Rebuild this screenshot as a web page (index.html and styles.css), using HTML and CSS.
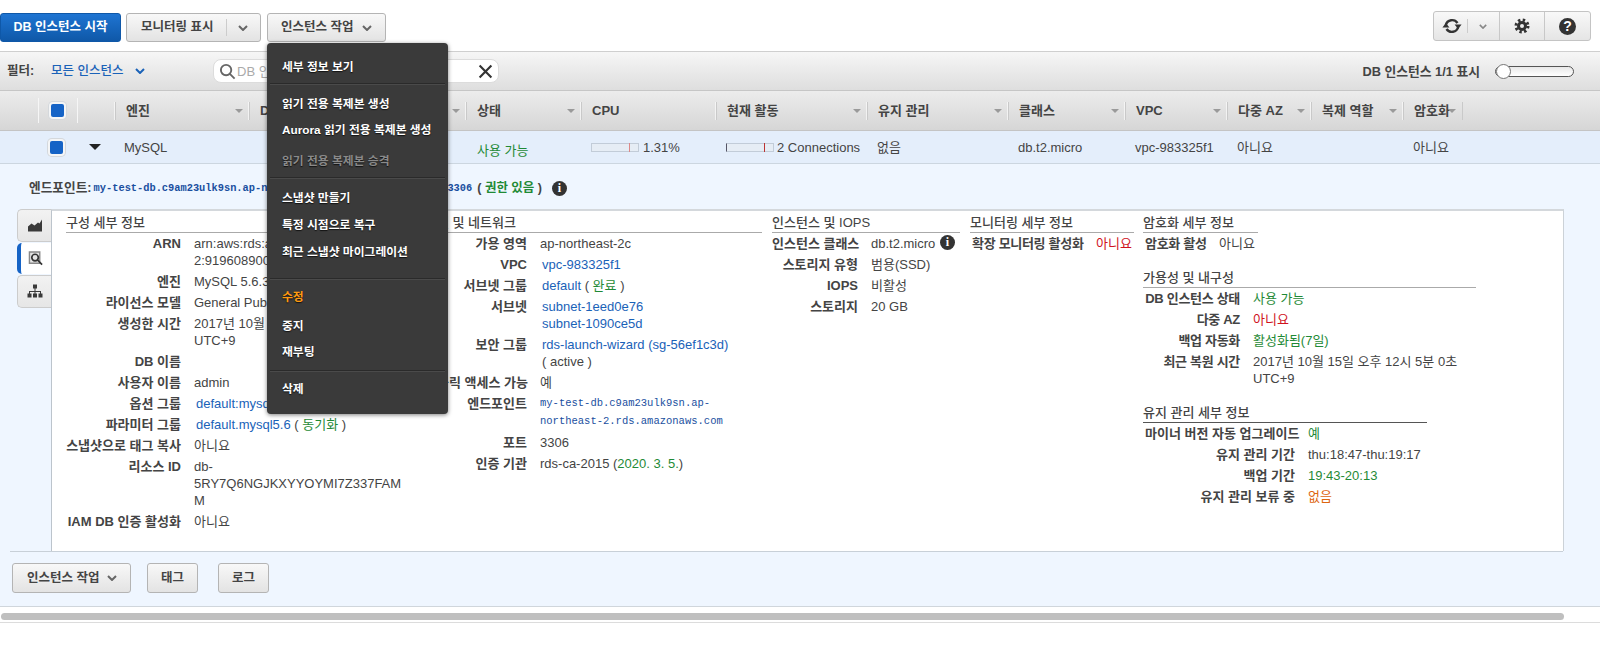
FILE: index.html
```html
<!DOCTYPE html>
<html lang="ko">
<head>
<meta charset="utf-8">
<title>RDS 인스턴스</title>
<link rel="stylesheet" href="styles.css">
</head>
<body>
<header class="topbar">
  <button class="btn btn-primary btn-start">DB 인스턴스 시작</button>
  <button class="btn btn-monitor"><span>모니터링 표시</span><i class="btn-div"></i><svg class="chev" viewBox="0 0 10 6"><path d="M1 1l4 4 4-4"/></svg></button>
  <button class="btn btn-actions"><span>인스턴스 작업</span><svg class="chev" viewBox="0 0 10 6"><path d="M1 1l4 4 4-4"/></svg></button>
  <div class="toolgroup">
    <div class="tool tool-refresh">
      <svg class="ic-refresh" viewBox="0 0 20 20"><path d="M3.800 9A6.500 6.500 0 0 1 15.500 7"/><path d="M16.200 11A6.500 6.500 0 0 1 4.500 13"/><path class="fill" d="M12.600 8.500h7L16.100 13zM7.400 11.500h-7L3.900 7z"/></svg>
      <i class="tool-div"></i>
      <svg class="chev chev-sm" viewBox="0 0 10 6"><path d="M1 1l4 4 4-4"/></svg>
    </div>
    <div class="tool tool-gear">
      <svg class="ic-gear" viewBox="0 0 16 16"><circle class="teeth" cx="8" cy="8" r="6"/><circle class="fill" cx="8" cy="8" r="5"/><circle class="hole" cx="8" cy="8" r="2"/></svg>
    </div>
    <div class="tool tool-help"><span class="help">?</span></div>
  </div>
</header>

<section class="filterbar">
  <span class="filter-label">필터:</span>
  <span class="filter-value">모든 인스턴스</span>
  <svg class="chev chev-blue" viewBox="0 0 10 6"><path d="M1 1l4 4 4-4"/></svg>
  <div class="search">
    <svg class="ic-search" viewBox="0 0 18 18"><circle cx="7.500" cy="7.500" r="5.500"/><path d="M11.500 11.500l5 5"/></svg>
    <span class="placeholder">DB 인스턴스 필터링</span>
    <svg class="ic-x" viewBox="0 0 14 14"><path d="M1.500 1.500l11 11M12.500 1.500l-11 11"/></svg>
  </div>
  <span class="count">DB 인스턴스 1/1 표시</span>
  <div class="slider"><i class="knob"></i></div>
</section>

<div class="thead cols">
  <div class="th th-blank"></div>
  <div class="th th-check th-tall"><i class="check"></i></div>
  <div class="th th-tall"></div>
  <div class="th sort">엔진</div>
  <div class="th sort">DB 인스턴스</div>
  <div class="th sort">상태</div>
  <div class="th">CPU</div>
  <div class="th sort">현재 활동</div>
  <div class="th sort">유지 관리</div>
  <div class="th sort">클래스</div>
  <div class="th sort">VPC</div>
  <div class="th sort">다중 AZ</div>
  <div class="th sort">복제 역할</div>
  <div class="th sort th-last">암호화</div>
</div>

<div class="trow cols">
  <div></div>
  <div class="td-check"><i class="check"></i></div>
  <div class="td-arrow"><i class="tri"></i></div>
  <div class="td td-first">MySQL</div>
  <div class="td"></div>
  <div class="td green td-low">사용 가능</div>
  <div class="td td-first"><i class="bar"><b class="tick tick-cpu"></b></i>1.31%</div>
  <div class="td td-first"><i class="bar bar-conn"><b class="tick tick-conn"></b></i>2 Connections</div>
  <div class="td">없음</div>
  <div class="td">db.t2.micro</div>
  <div class="td">vpc-983325f1</div>
  <div class="td">아니요</div>
  <div class="td"></div>
  <div class="td">아니요</div>
</div>

<section class="detail">
  <div class="endpoint">
    <strong>엔드포인트:</strong>
    <span class="mono mono-blue">my-test-db.c9am23ulk9sn.ap-northeast-2.rds.amazonaws.com:3306</span>
    <span class="paren">( <span class="green">권한 있음</span> )</span>
    <span class="info">i</span>
  </div>
  <div class="panelwrap">
    <nav class="tabs">
      <div class="tab">
        <svg class="ic-tab" viewBox="0 0 16 14"><path d="M1 13V8l3.500-3 3 2L11 4l1.500 1L15 1v12z"/></svg>
      </div>
      <div class="tab tab-on">
        <svg class="ic-tab ic-mag" viewBox="0 0 16 16"><path class="doc" d="M1 1h11v12H1z"/><circle class="lens" cx="7" cy="7" r="3.500"/><path class="lens" d="M9.500 9.500l5 5"/></svg>
      </div>
      <div class="tab">
        <svg class="ic-tab" viewBox="0 0 16 14"><path d="M6 0h4v4H8.500v2.500H14V9h1.500v4h-4V9h1.500V7.500H8.500V9H10v4H6V9h1.500V7.500H3V9h1.500v4h-4V9H2V6.500h5.500V4H6z"/></svg>
      </div>
    </nav>
    <div class="panel">
      <div class="col col1">
        <h3>구성 세부 정보</h3>
        <dl class="kv kv1">
          <dt>ARN</dt><dd>arn:aws:rds:ap-northeast-2:919608900000:db:my-test-db</dd>
          <dt>엔진</dt><dd>MySQL 5.6.35</dd>
          <dt>라이선스 모델</dt><dd>General Public License</dd>
          <dt>생성한 시간</dt><dd>2017년 10월 15일 오후 12시 5분 0초 UTC+9</dd>
          <dt>DB 이름</dt><dd>&nbsp;</dd>
          <dt>사용자 이름</dt><dd>admin</dd>
          <dt>옵션 그룹</dt><dd class="in"><a>default:mysql-5-6</a> ( <span class="green">동기화</span> )</dd>
          <dt>파라미터 그룹</dt><dd class="in"><a>default.mysql5.6</a> ( <span class="green">동기화</span> )</dd>
          <dt>스냅샷으로 태그 복사</dt><dd>아니요</dd>
          <dt>리소스 ID</dt><dd class="brk">db-<br>5RY7Q6NGJKXYYOYMI7Z337FAM<br>M</dd>
          <dt>IAM DB 인증 활성화</dt><dd>아니요</dd>
        </dl>
      </div>
      <div class="col col2">
        <h3>연결 및 네트워크</h3>
        <dl class="kv kv2">
          <dt>가용 영역</dt><dd>ap-northeast-2c</dd>
          <dt>VPC</dt><dd class="in"><a>vpc-983325f1</a></dd>
          <dt>서브넷 그룹</dt><dd class="in"><a>default</a> ( <span class="green">완료</span> )</dd>
          <dt>서브넷</dt><dd class="in"><a>subnet-1eed0e76</a><br><a>subnet-1090ce5d</a></dd>
          <dt>보안 그룹</dt><dd class="in"><a>rds-launch-wizard (sg-56ef1c3d)</a><br>( active )</dd>
          <dt>퍼블릭 액세스 가능</dt><dd>예</dd>
          <dt>엔드포인트</dt><dd class="mono mono-wrap">my-test-db.c9am23ulk9sn.ap-<br>northeast-2.rds.amazonaws.com</dd>
          <dt>포트</dt><dd>3306</dd>
          <dt>인증 기관</dt><dd>rds-ca-2015 (<span class="green">2020. 3. 5.</span>)</dd>
        </dl>
      </div>
      <div class="col col3">
        <h3>인스턴스 및 IOPS</h3>
        <dl class="kv kv3">
          <dt>인스턴스 클래스</dt><dd class="nowrap">db.t2.micro <span class="info info-sm">i</span></dd>
          <dt>스토리지 유형</dt><dd>범용(SSD)</dd>
          <dt>IOPS</dt><dd>비활성</dd>
          <dt>스토리지</dt><dd>20 GB</dd>
        </dl>
      </div>
      <div class="col col4">
        <h3>모니터링 세부 정보</h3>
        <dl class="kv kv4">
          <dt>확장 모니터링 활성화</dt><dd class="red">아니요</dd>
        </dl>
      </div>
      <div class="col col5">
        <div class="sec sec-enc">
          <h3>암호화 세부 정보</h3>
          <dl class="kv kv5">
            <dt>암호화 활성</dt><dd>아니요</dd>
          </dl>
        </div>
        <div class="sec sec-avail">
          <h3>가용성 및 내구성</h3>
          <dl class="kv kv6">
            <dt>DB 인스턴스 상태</dt><dd class="green">사용 가능</dd>
            <dt>다중 AZ</dt><dd class="red">아니요</dd>
            <dt>백업 자동화</dt><dd class="green">활성화됨(7일)</dd>
            <dt>최근 복원 시간</dt><dd>2017년 10월 15일 오후 12시 5분 0초 UTC+9</dd>
          </dl>
        </div>
        <div class="sec sec-maint">
          <h3 class="h-dark">유지 관리 세부 정보</h3>
          <dl class="kv kv7">
            <dt>마이너 버전 자동 업그레이드</dt><dd class="green">예</dd>
            <dt>유지 관리 기간</dt><dd>thu:18:47-thu:19:17</dd>
            <dt>백업 기간</dt><dd class="green">19:43-20:13</dd>
            <dt>유지 관리 보류 중</dt><dd class="orange">없음</dd>
          </dl>
        </div>
      </div>
    </div>
  </div>
  <footer class="actions">
    <button class="btn btn-foot-actions"><span>인스턴스 작업</span><svg class="chev" viewBox="0 0 10 6"><path d="M1 1l4 4 4-4"/></svg></button>
    <button class="btn btn-foot">태그</button>
    <button class="btn btn-foot">로그</button>
  </footer>
</section>

<div class="scrollbar"><div class="thumb"></div></div>

<ul class="menu">
  <li class="mi mi-first">세부 정보 보기</li>
  <li class="sep"></li>
  <li class="mi mi-a">읽기 전용 복제본 생성</li>
  <li class="mi mi-b">Aurora 읽기 전용 복제본 생성</li>
  <li class="mi mi-c off">읽기 전용 복제본 승격</li>
  <li class="sep sep-b"></li>
  <li class="mi mi-a">스냅샷 만들기</li>
  <li class="mi mi-d">특정 시점으로 복구</li>
  <li class="mi mi-e">최근 스냅샷 마이그레이션</li>
  <li class="sep sep-c"></li>
  <li class="mi mi-f hot">수정</li>
  <li class="mi mi-h">중지</li>
  <li class="mi mi-i">재부팅</li>
  <li class="sep sep-d"></li>
  <li class="mi mi-g">삭제</li>
</ul>
</body>
</html>
```
FILE: styles.css
```css
* { box-sizing: border-box; }
html, body { margin: 0; padding: 0; }
body {
  position: relative;
  width: 1600px;
  height: 661px;
  overflow: hidden;
  background: #fff;
  color: #444;
  font: 13px/17px "Liberation Sans", "Noto Sans CJK KR", sans-serif;
}
i { font-style: normal; display: block; }
svg { display: block; }
a { color: #1a62b8; }
.green { color: #1f8a36; }
.red { color: #d0121c; }
.orange { color: #dd6510; }

/* top bar */
.topbar {
  display: flex;
  align-items: flex-start;
  height: 52px;
  padding-top: 13px;
  border-bottom: 1px solid #cfcfcf;
}
.btn {
  display: flex;
  align-items: center;
  justify-content: center;
  height: 29px;
  padding: 0;
  border: 1px solid #b4b4b4;
  border-radius: 3px;
  background: linear-gradient(#f8f8f8, #e3e3e3);
  color: #444;
  font: 700 12.5px/17px "Liberation Sans", "Noto Sans CJK KR", sans-serif;
}
.btn-primary {
  background: linear-gradient(#1e74d2, #0f58a8);
  border-color: #0f58a8;
  color: #fff;
}
.btn-start { width: 121px; margin-right: 5px; }
.btn-monitor { width: 135px; margin-right: 6px; padding-left: 14px; justify-content: flex-start; }
.btn-div { width: 1px; height: 17px; background: #ccc; margin: 0 11px 0 13px; }
.btn-actions { width: 119px; justify-content: flex-start; padding-left: 13px; }
.btn-actions .chev { margin-left: 9px; }
.chev { width: 10px; height: 6px; }
.chev path { fill: none; stroke: #666; stroke-width: 2; }
.chev-sm { width: 8px; height: 5px; }
.chev-sm path { stroke: #888; }
.chev-blue path { stroke: #1a62b8; }

.toolgroup {
  display: flex;
  height: 30px;
  margin: -2px 9px 0 auto;
  width: 158px;
  border: 1px solid #c4c4c4;
  border-radius: 3px;
  background: linear-gradient(#f8f8f8, #e5e5e5);
}
.tool { display: flex; align-items: center; justify-content: center; }
.tool-refresh { width: 66px; border-right: 1px solid #c8c8c8; padding-left: 8px; justify-content: flex-start; }
.tool-gear { width: 45px; border-right: 1px solid #c8c8c8; }
.tool-help { flex: 1; }
.tool-div { width: 1px; height: 14px; background: #ccc; margin: 0 11px 0 5px; }
.ic-refresh { width: 20px; height: 20px; }
.ic-refresh path { fill: none; stroke: #333; stroke-width: 2.400; }
.ic-refresh path.fill { fill: #333; stroke: none; }
.ic-gear { width: 16px; height: 16px; }
.fill { fill: #333; }
.teeth { fill: none; stroke: #333; stroke-width: 3; stroke-dasharray: 2.360 2.352; }
.hole { fill: #eee; }
.help {
  width: 17px; height: 17px;
  border-radius: 50%;
  background: #333;
  color: #fff;
  font: 700 14px/17px "Liberation Sans", sans-serif;
  text-align: center;
}

/* filter */
.filterbar {
  display: flex;
  align-items: center;
  height: 39px;
  padding: 0 0 0 7px;
  background: linear-gradient(#f6f6f6, #dedede);
  border-bottom: 1px solid #c6c6c6;
}
.filter-label { font-weight: 700; font-size: 12.5px; color: #444; width: 44px; }
.filter-value { color: #1a62b8; font-weight: 500; font-size: 12.5px; width: 84px; }
.chev-blue { margin-right: 68px; }
.search {
  display: flex;
  align-items: center;
  width: 286px;
  height: 24px;
  padding: 0 5px 0 5px;
  background: #fff;
  border: 1px solid #dcdcdc;
  border-radius: 8px;
}
.ic-search { width: 17px; height: 17px; }
.ic-search circle, .ic-search path { fill: none; stroke: #666; stroke-width: 2; }
.placeholder { margin-left: 1px; color: #aaa; font-size: 13px; }
.ic-x { width: 15px; height: 15px; margin-left: auto; }
.ic-x path { stroke: #333; stroke-width: 2; fill: none; }
.count { margin-left: auto; font-weight: 700; font-size: 12.8px; color: #444; }
.slider {
  position: relative;
  width: 79px;
  height: 11px;
  margin: 0 26px 0 15px;
  border: 1px solid #555;
  border-radius: 6px;
  background: linear-gradient(#e8e8e8, #fff);
}
.knob {
  position: absolute;
  left: 0; top: -3px;
  width: 15px; height: 15px;
  border: 1px solid #777;
  border-radius: 50%;
  background: #fff;
}

/* table */
.cols {
  display: grid;
  grid-template-columns: 38px 39px 38px 134px 217px 115px 135px 151px 141px 117px 102px 84px 92px 60px 1fr;
}
.thead {
  height: 40px;
  align-items: center;
  background: linear-gradient(#ececec, #d6d6d6);
  border-bottom: 1px solid #c4c4c4;
}
.th {
  position: relative;
  height: 18px;
  padding-left: 10px;
  border-left: 1px solid #c9c9c9;
  box-shadow: -1px 0 0 rgba(255,255,255,.6);
  font-weight: 700;
  font-size: 13px;
  line-height: 18px;
  color: #444;
  white-space: nowrap;
}
.th-blank { border-left: 0; box-shadow: none; }
.th-tall { height: 25px; border-left-color: #f6f6f6; box-shadow: none; }
.th-check { padding-left: 12px; display: flex; align-items: center; }
.th-last { border-right: 1px solid #c9c9c9; }
.sort::after {
  content: "";
  position: absolute;
  right: 6px;
  top: 7px;
  border: 4px solid transparent;
  border-top: 4px solid #9a9a9a;
  border-bottom: 0;
}
.check {
  position: relative;
  width: 13px;
  height: 13px;
  border-radius: 2px;
  background: #1563c6;
  box-shadow: 0 0 0 2px rgba(255,255,255,.75), 0 0 0 3px #d4d8dc;
}
.trow {
  height: 33px;
  align-items: center;
  background: #e4eefb;
  border-bottom: 1px solid #ccd6e0;
  color: #444;
}
.td { padding-left: 10px; white-space: nowrap; display: flex; align-items: center; }
.td-first { padding-left: 9px; }
.td-low { padding-top: 6px; padding-left: 11px; }
.td-check { padding-left: 12px; }
.td-arrow { padding-left: 12px; }
.tri {
  width: 0; height: 0;
  border: 6px solid transparent;
  border-top: 6px solid #222;
  border-bottom: 0;
}
.bar {
  position: relative;
  width: 48px;
  height: 9px;
  margin: 0 4px 0 1px;
  border: 1px solid #c2ccd8;
  background: #e6edf5;
}
.bar-conn { margin-right: 3px; border-left: 1px solid #556; }
.tick { position: absolute; top: -1px; width: 1px; height: 9px; }
.tick-cpu { left: 37px; background: #d88; }
.tick-conn { left: 37px; background: #b33; }

/* details */
.detail {
  height: 443px;
  background: #eff6ff;
  border-bottom: 1px solid #d0d6dc;
}
.endpoint {
  display: flex;
  align-items: center;
  gap: 2px;
  height: 45px;
  padding: 4px 0 0 29px;
  font-size: 12.5px;
}
.endpoint strong { font-size: 12.700px; }
.mono { font-family: "Liberation Mono", monospace; font-size: 10.5px; }
.mono-blue { color: #1a4fa0; font-weight: 700; font-size: 10.350px; }
.paren { margin-left: 3px; font-weight: 700; }
.paren .green { font-weight: 700; }
.info {
  display: inline-block;
  width: 15px; height: 15px;
  margin-left: 8px;
  border-radius: 50%;
  background: #333;
  color: #fff;
  font: 700 12px/15px "Liberation Serif", serif;
  text-align: center;
}
.info-sm { margin-left: 1px; vertical-align: top; }
.panelwrap { display: flex; padding-left: 17px; }
.tabs { width: 34px; flex: none; padding-top: 0; }
.tab {
  display: flex;
  align-items: center;
  justify-content: center;
  height: 33px;
  margin-bottom: 1px;
  background: linear-gradient(#f2f2f2, #e6e6e6);
  border: 1px solid #ccc;
  border-right: 0;
  border-radius: 5px 0 0 5px;
}
.tab-on {
  height: 31px;
  background: #fff;
  border: 0;
  border-left: 4px solid #1563c6;
  margin-bottom: 1px;
}
.ic-tab { width: 16px; height: 15px; fill: #3a3a3a; }
.ic-mag .doc { fill: #e4e4e4; stroke: #888; stroke-width: 1.500; }
.ic-mag .lens { fill: none; stroke: #333; stroke-width: 1.800; }
.panel {
  display: flex;
  width: 1513px;
  height: 342px;
  padding: 3px 0 0 14px;
  background: #fff;
  border-top: 2px solid #d4d8dc;
  border-left: 1px solid #bcc4cc;
  border-right: 1px solid #ccd2d8;
}
.col { flex: none; }
.col1 { width: 338px; margin-right: 21px; }
.col2 { width: 337px; margin-right: 10px; }
.col3 { width: 188px; margin-right: 10px; }
.col4 { width: 164px; margin-right: 9px; }
.col5 { width: 340px; }
h3 {
  margin: 0 0 2px;
  height: 19px;
  border-bottom: 1px solid #aaa;
  font-weight: 500;
  font-size: 13px;
  line-height: 17px;
  color: #444;
  white-space: nowrap;
}
.h-dark { border-bottom-color: #555; }
.kv {
  display: grid;
  row-gap: 4px;
  column-gap: 13px;
  margin: 0;
  justify-content: start;
}
dt {
  text-align: right;
  font-weight: 700;
  color: #444;
  white-space: nowrap;
}
dd { margin: 0; color: #444; min-width: 0; }
dd.in { padding-left: 2px; }
dd.green { color: #1f8a36; }
dd.red { color: #d0121c; }
dd.orange { color: #dd6510; }
.brk { word-break: break-all; }
.nowrap { white-space: nowrap; }
.mono-wrap { line-height: 17.500px; white-space: nowrap; color: #1a4fa0; }
.kv1 { grid-template-columns: 115px 209px; }
.kv2 { grid-template-columns: 102px 221px; }
.kv3 { grid-template-columns: 86px 89px; }
.kv4 { grid-template-columns: 111px auto; padding-left: 2px; }
.kv5 { grid-template-columns: 61px auto; padding-left: 2px; }
.kv6 { grid-template-columns: 95px 222px; padding-left: 2px; }
.kv7 { grid-template-columns: 150px auto; padding-left: 2px; }
.kv4 dt, .kv5 dt, .kv6 dt { letter-spacing: -.3px; }
.sec { margin-bottom: 17px; }
.sec-enc { width: 115px; }
.sec-avail { width: 333px; }
.sec-maint { width: 284px; }

.actions {
  display: flex;
  align-items: flex-start;
  margin: 0 37px 0 10px;
  padding: 11px 0 0 2px;
  height: 56px;
  border-top: 1px solid #c8d0d8;
}
.btn-foot-actions { width: 119px; margin-right: 16px; justify-content: flex-start; padding-left: 14px; height: 30px; }
.btn-foot-actions .chev { margin-left: 8px; }
.btn-foot { width: 51px; height: 30px; margin-right: 20px; }

.scrollbar {
  height: 16px;
  padding: 6px 36px 2px 1px;
  border-bottom: 1px solid #dcdcdc;
}
.thumb { height: 7px; border-radius: 4px; background: #bfbfbf; }

/* dropdown */
.menu {
  position: absolute;
  left: 267px;
  top: 43px;
  width: 181px;
  height: 371px;
  margin: 0;
  padding: 0 3px;
  list-style: none;
  background: #3a3a3a;
  border-radius: 4px;
  box-shadow: 0 1px 4px rgba(0,0,0,.5);
}
.mi {
  padding-left: 12px;
  color: #fff;
  font-weight: 700;
  font-size: 11.800px;
  line-height: 17px;
  white-space: nowrap;
  text-shadow: 0 1px 1px #111;
}
.off { color: #8a8a8a; }
.hot { color: #ff9a10; }
.sep { height: 2px; background: #2a2a2a; border-bottom: 1px solid #4a4a4a; }
.mi-first { margin-top: 16px; margin-bottom: 7px; }
.mi-a { margin-top: 11px; }
.mi-b { margin-top: 9px; }
.mi-c { margin-top: 14px; margin-bottom: 7px; }
.mi-d { margin-top: 10px; }
.mi-e { margin-top: 10px; }
.mi-f { margin-top: 9px; }
.mi-h { margin-top: 12px; }
.mi-i { margin-top: 9px; }
.mi-g { margin-top: 9px; }
.sep-c { margin-top: 17px; }
.sep-d { margin-top: 9px; }
```
